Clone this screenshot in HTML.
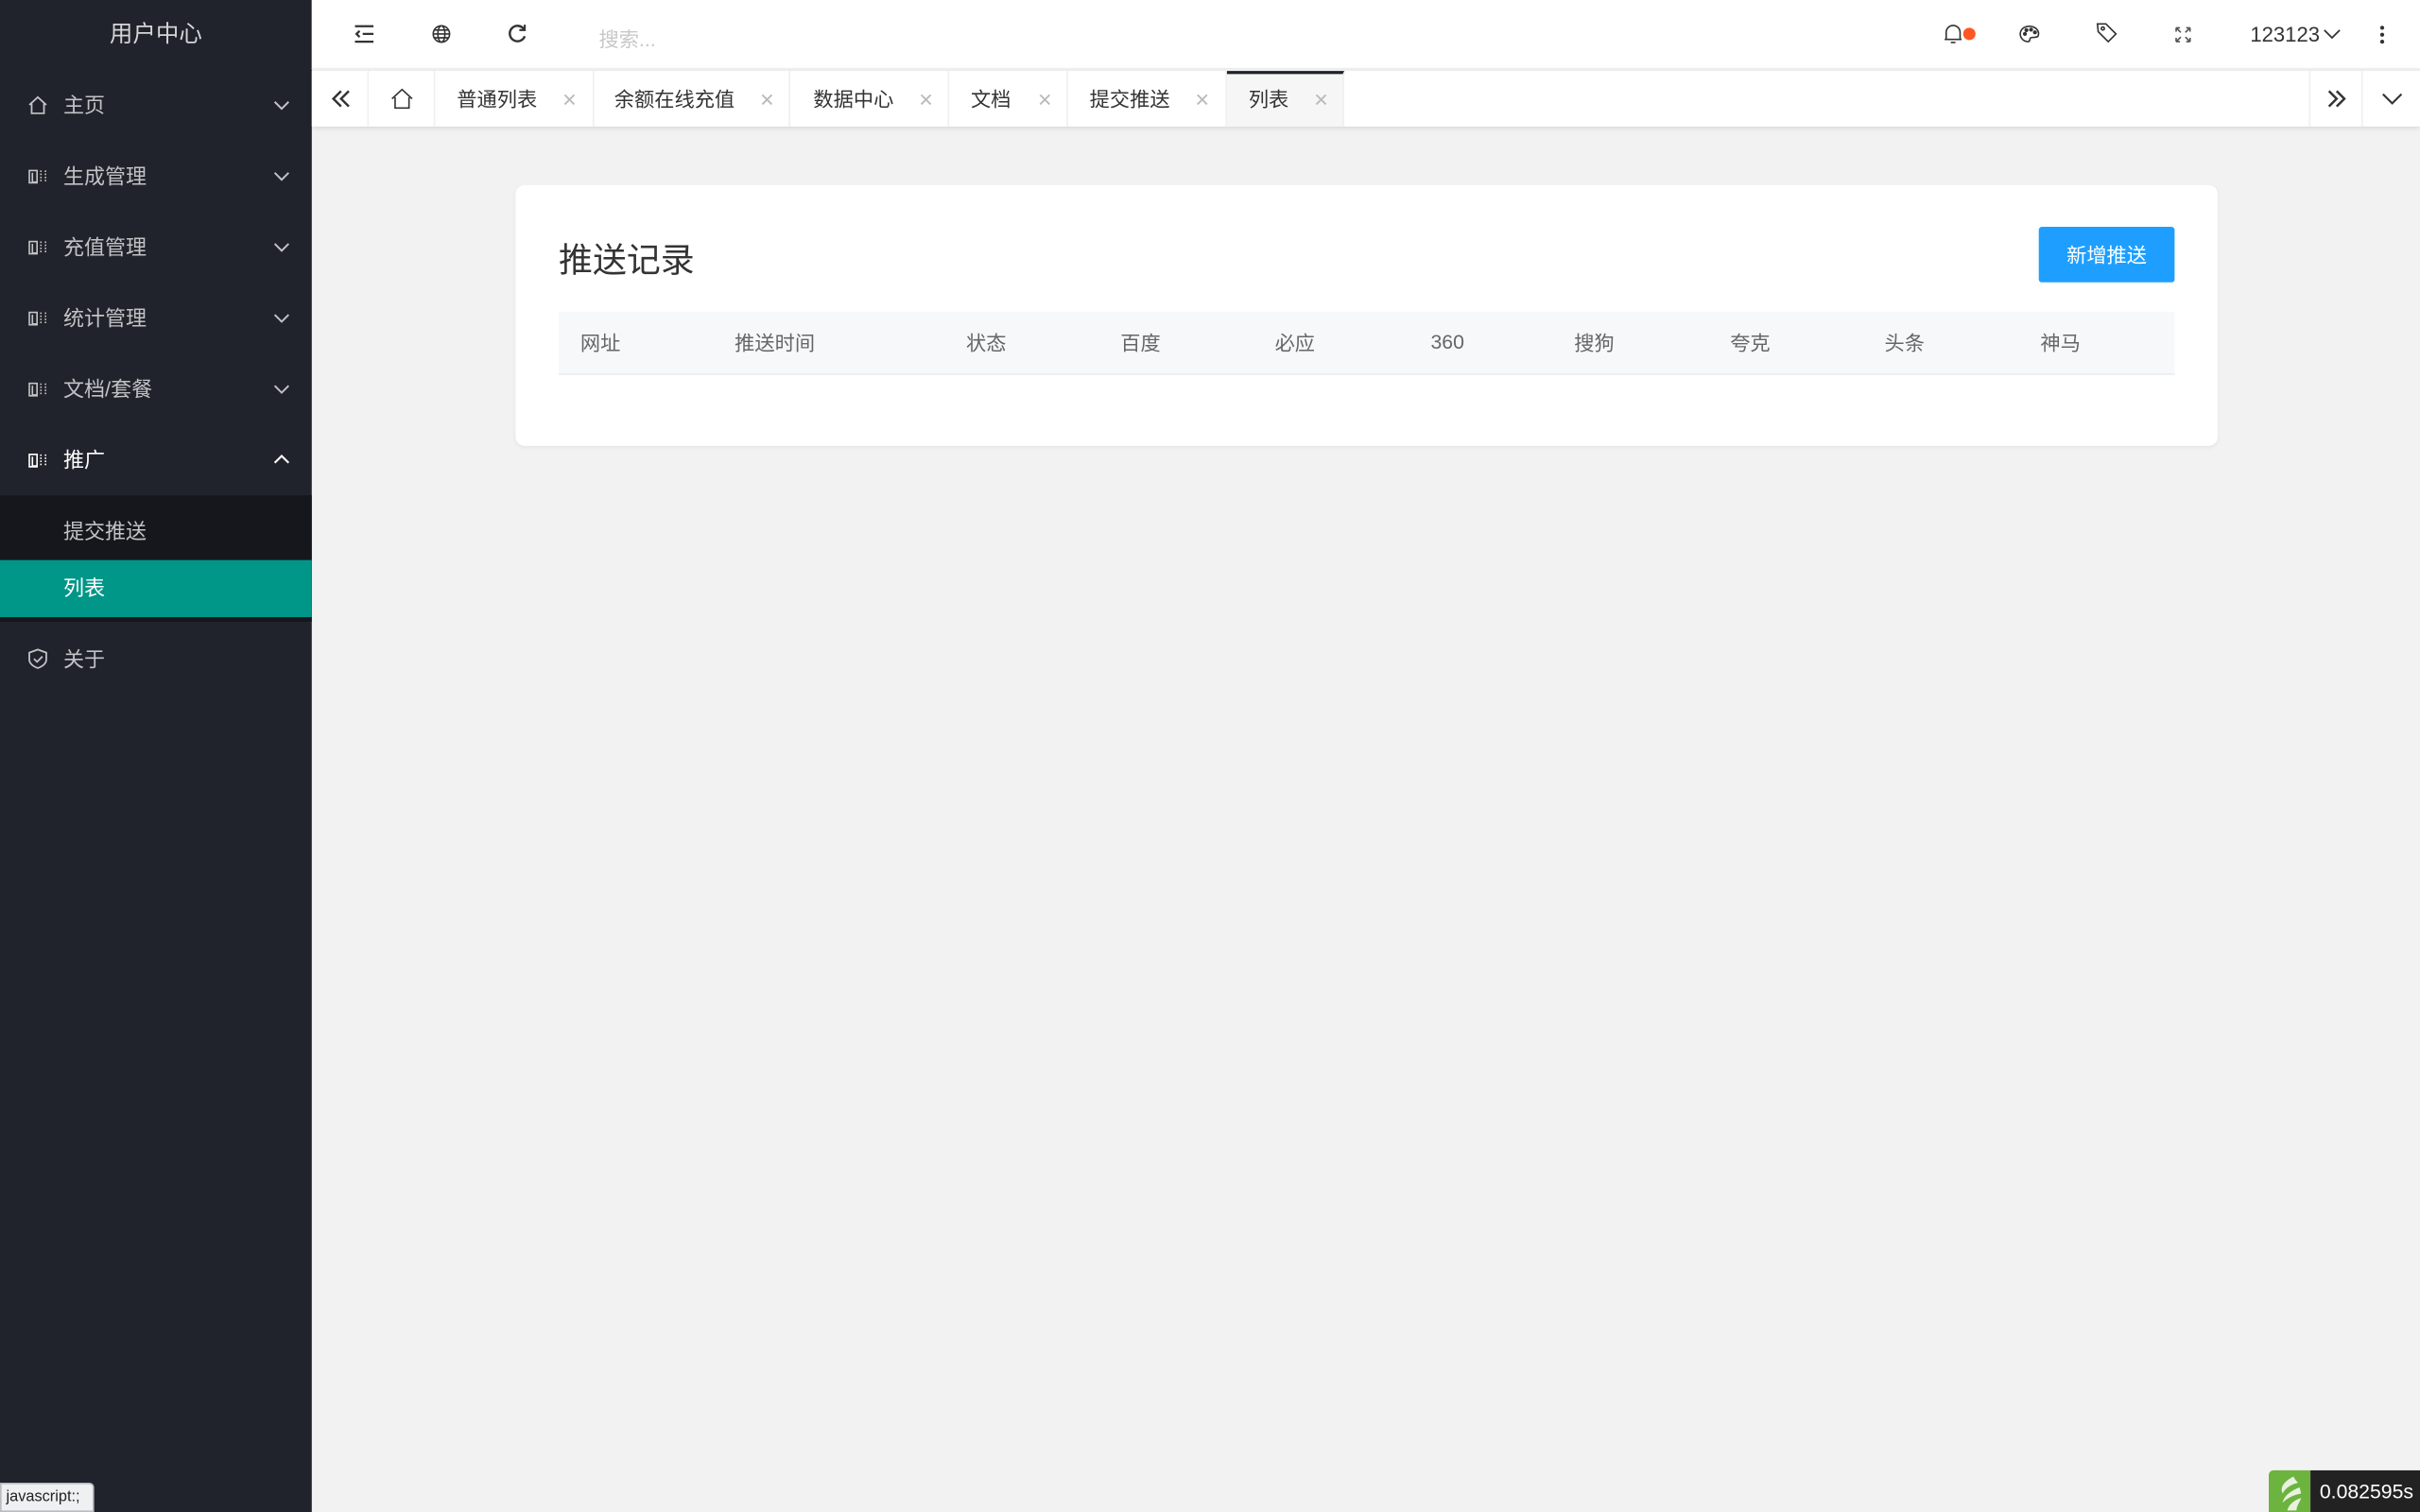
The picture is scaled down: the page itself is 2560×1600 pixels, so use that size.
<!DOCTYPE html>
<html><head><meta charset="utf-8"><style>
*{margin:0;padding:0;box-sizing:border-box}
html,body{width:2560px;height:1600px;overflow:hidden;background:#f2f2f2}
#w{width:1568px;height:980px;transform:scale(1.632653);transform-origin:0 0;position:relative;font-family:"Liberation Sans","Noto Sans CJK SC",sans-serif;background:#f2f2f2}
.a{position:absolute}
.side{left:0;top:0;width:202px;height:980px;background:#20232b}
.mi{position:absolute;left:0;width:202px;height:46px;color:#c2c3c6;font-size:13.5px;line-height:48px}
.mi .t{position:absolute;left:41px}
.mi svg{position:absolute}
.tx{font-size:13px;color:#333;position:absolute;top:0;line-height:38px}
.tab{position:absolute;top:0;height:36px;border-right:1px solid #f0f0f0}
.x{position:absolute;top:0;line-height:38px;color:#bbb;font-size:12px}
.th{position:absolute;top:0;line-height:42px;font-size:13px;color:#666}
</style></head><body><div id="w">
<div class="a side">
 <div class="a" style="left:0;top:0;width:202px;height:45px;line-height:46px;text-align:center;color:#d4d5d7;font-size:15px">用户中心</div>
 <div class="mi" style="top:45px"><svg style="left:18px;top:17px" width="13" height="12" viewBox="0 0 13 12" fill="none" stroke="#c2c3c6" stroke-width="1.1"><path d="M1 6L6.5 1 12 6M2.5 5v6.5h8V5"/></svg><span class="t">主页</span><svg style="left:177px;top:20px" width="11" height="7" viewBox="0 0 11 7" fill="none" stroke="#c2c3c6" stroke-width="1.2"><path d="M1 1l4.5 4.5L10 1"/></svg></div>
 <div class="mi" style="top:91px"><svg style="left:18px;top:18px" width="13" height="11" viewBox="0 0 13 11" fill="none" stroke="#c2c3c6" stroke-width="1"><path d="M1 1.5h5v8H1zM3 3v6h3M8 2h1M8 4h1M8 6h1M8 8h1M11 2h1M11 4h1M11 6h1M11 8h1"/></svg><span class="t">生成管理</span><svg style="left:177px;top:20px" width="11" height="7" viewBox="0 0 11 7" fill="none" stroke="#c2c3c6" stroke-width="1.2"><path d="M1 1l4.5 4.5L10 1"/></svg></div>
 <div class="mi" style="top:137px"><svg style="left:18px;top:18px" width="13" height="11" viewBox="0 0 13 11" fill="none" stroke="#c2c3c6" stroke-width="1"><path d="M1 1.5h5v8H1zM3 3v6h3M8 2h1M8 4h1M8 6h1M8 8h1M11 2h1M11 4h1M11 6h1M11 8h1"/></svg><span class="t">充值管理</span><svg style="left:177px;top:20px" width="11" height="7" viewBox="0 0 11 7" fill="none" stroke="#c2c3c6" stroke-width="1.2"><path d="M1 1l4.5 4.5L10 1"/></svg></div>
 <div class="mi" style="top:183px"><svg style="left:18px;top:18px" width="13" height="11" viewBox="0 0 13 11" fill="none" stroke="#c2c3c6" stroke-width="1"><path d="M1 1.5h5v8H1zM3 3v6h3M8 2h1M8 4h1M8 6h1M8 8h1M11 2h1M11 4h1M11 6h1M11 8h1"/></svg><span class="t">统计管理</span><svg style="left:177px;top:20px" width="11" height="7" viewBox="0 0 11 7" fill="none" stroke="#c2c3c6" stroke-width="1.2"><path d="M1 1l4.5 4.5L10 1"/></svg></div>
 <div class="mi" style="top:229px"><svg style="left:18px;top:18px" width="13" height="11" viewBox="0 0 13 11" fill="none" stroke="#c2c3c6" stroke-width="1"><path d="M1 1.5h5v8H1zM3 3v6h3M8 2h1M8 4h1M8 6h1M8 8h1M11 2h1M11 4h1M11 6h1M11 8h1"/></svg><span class="t">文档/套餐</span><svg style="left:177px;top:20px" width="11" height="7" viewBox="0 0 11 7" fill="none" stroke="#c2c3c6" stroke-width="1.2"><path d="M1 1l4.5 4.5L10 1"/></svg></div>
 <div class="mi" style="top:275px;color:#fff"><svg style="left:18px;top:18px" width="13" height="11" viewBox="0 0 13 11" fill="none" stroke="#fff" stroke-width="1"><path d="M1 1.5h5v8H1zM3 3v6h3M8 2h1M8 4h1M8 6h1M8 8h1M11 2h1M11 4h1M11 6h1M11 8h1"/></svg><span class="t">推广</span><svg style="left:177px;top:19px" width="11" height="7" viewBox="0 0 11 7" fill="none" stroke="#fff" stroke-width="1.3"><path d="M1 6l4.5-4.5L10 6"/></svg></div>
 <div class="a" style="left:0;top:321px;width:202px;height:82px;background:#16171c"></div>
 <div class="mi" style="top:321px;height:42px;line-height:48px"><span class="t">提交推送</span></div>
 <div class="mi" style="top:363px;height:37px;line-height:37px;background:#009688;color:#fff"><span class="t">列表</span></div>
 <div class="mi" style="top:404px"><svg style="left:18px;top:16px" width="13" height="14" viewBox="0 0 13 14" fill="none" stroke="#c2c3c6" stroke-width="1.1"><path d="M6.5 1L12 3v4.5C12 10 9.5 12 6.5 13 3.5 12 1 10 1 7.5V3z"/><path d="M4 7l2 2 3.5-3.5"/></svg><span class="t">关于</span></div>
</div>
<div class="a" style="left:202px;top:0;width:1366px;height:45px;background:#fff;border-bottom:1px solid #f0f0f0"></div>
<svg class="a" style="left:229px;top:16px" width="14" height="12" viewBox="0 0 14 12" fill="none" stroke="#333" stroke-width="1.4"><path d="M1 1h12M6 6h7M1 11h12M4 4L2 6l2 2"/></svg>
<svg class="a" style="left:280px;top:16px" width="12" height="12" viewBox="0 0 12 12" fill="none" stroke="#333" stroke-width="1"><circle cx="6" cy="6" r="5.3"/><ellipse cx="6" cy="6" rx="2.3" ry="5.3"/><path d="M.7 6h10.6M1.5 3.5h9M1.5 8.5h9"/></svg>
<svg class="a" style="left:329px;top:15px" width="13" height="13" viewBox="0 0 13 13" fill="none" stroke="#333" stroke-width="1.5"><path d="M10.5 4A5 5 0 1 0 11 8.5"/><path d="M11 1v3.5H7.5" stroke-width="1.3"/></svg>
<div class="a" style="left:388px;top:15px;font-size:13px;color:#c8c8c8">搜索...</div>
<svg class="a" style="left:1259px;top:15px" width="13" height="14" viewBox="0 0 13 14" fill="none" stroke="#333" stroke-width="1"><path d="M2 10.5V6a4.5 4.5 0 0 1 9 0v4.5M1 10.5h11M5 12.5h3"/></svg>
<div class="a" style="left:1272px;top:18px;width:8px;height:8px;border-radius:50%;background:#ff5722"></div>
<svg class="a" style="left:1308px;top:16px" width="14" height="12" viewBox="0 0 14 12" fill="none" stroke="#333" stroke-width="1"><path d="M7 1C3 1 1 3.5 1 6c0 3 2.5 5 5 5 1.5 0 1-1.5 1.5-2.3.7-1 4.5.3 5.2-1.7C13.5 4 11 1 7 1z"/><circle cx="4" cy="6" r=".8" fill="#333"/><circle cx="5" cy="3.5" r=".8" fill="#333"/><circle cx="8" cy="3.2" r=".8" fill="#333"/><circle cx="10.5" cy="5" r=".8" fill="#333"/></svg>
<svg class="a" style="left:1358px;top:14px" width="14" height="14" viewBox="0 0 14 14" fill="none" stroke="#333" stroke-width="1"><path d="M1 1.5h5.5l6.5 6.5-5 5L1.5 6.5z"/><circle cx="4.5" cy="4.5" r="1"/></svg>
<svg class="a" style="left:1409px;top:17px" width="11" height="11" viewBox="0 0 11 11" fill="none" stroke="#555" stroke-width="1"><path d="M1 1l3 3M1 1v2.5M1 1h2.5M10 1L7 4M10 1v2.5M10 1H7.5M1 10l3-3M1 10V7.5M1 10h2.5M10 10L7 7M10 10V7.5M10 10H7.5"/></svg>
<div class="a" style="left:1458px;top:15px;font-size:13.5px;color:#333">123123</div>
<svg class="a" style="left:1505px;top:18px" width="12" height="8" viewBox="0 0 12 8" fill="none" stroke="#333" stroke-width="1.1"><path d="M1 1.5l5 5 5-5"/></svg>
<svg class="a" style="left:1541px;top:16px" width="5" height="13" viewBox="0 0 5 13" fill="#333"><circle cx="2.5" cy="2" r="1.3"/><circle cx="2.5" cy="6.5" r="1.3"/><circle cx="2.5" cy="11" r="1.3"/></svg>
<div class="a" style="left:202px;top:46px;width:1366px;height:36px;background:#fff;box-shadow:0 1px 3px rgba(0,0,0,.12)">
 <div class="tab" style="left:0;width:37px"><svg style="position:absolute;left:12px;top:12px" width="14" height="12" viewBox="0 0 14 12" fill="none" stroke="#333" stroke-width="1.5"><path d="M7 1L2 6l5 5M12 1L7 6l5 5"/></svg></div>
 <div class="tab" style="left:37px;width:43px"><svg style="position:absolute;left:14px;top:11px" width="15" height="14" viewBox="0 0 15 14" fill="none" stroke="#333" stroke-width="1"><path d="M1 7L7.5 1 14 7M3 6v7h9V6"/></svg></div>
 <div class="tab" style="left:80px;width:103px"><span class="tx" style="left:14px">普通列表</span><span class="x" style="left:82px">✕</span></div>
 <div class="tab" style="left:183px;width:127px"><span class="tx" style="left:13px">余额在线充值</span><span class="x" style="left:107px">✕</span></div>
 <div class="tab" style="left:310px;width:103px"><span class="tx" style="left:15px">数据中心</span><span class="x" style="left:83px">✕</span></div>
 <div class="tab" style="left:413px;width:77px"><span class="tx" style="left:14px">文档</span><span class="x" style="left:57px">✕</span></div>
 <div class="tab" style="left:490px;width:103px"><span class="tx" style="left:14px">提交推送</span><span class="x" style="left:82px">✕</span></div>
 <div class="tab" style="left:593px;width:76px;background:#f6f6f6;border-top:2px solid #20222a"><span class="tx" style="left:14px;top:-2px">列表</span><span class="x" style="left:56px;top:-2px">✕</span></div>
 <div class="tab" style="left:1294px;width:35px;border-left:1px solid #f0f0f0"><svg style="position:absolute;left:10px;top:12px" width="14" height="12" viewBox="0 0 14 12" fill="none" stroke="#333" stroke-width="1.5"><path d="M2 1l5 5-5 5M7 1l5 5-5 5"/></svg></div>
 <div class="tab" style="left:1329px;width:37px;border:0"><svg style="position:absolute;left:12px;top:14px" width="14" height="8" viewBox="0 0 14 8" fill="none" stroke="#333" stroke-width="1.3"><path d="M1 1l6 6 6-6"/></svg></div>
</div>
<div class="a" style="left:334px;top:120px;width:1103px;height:169px;background:#fff;border-radius:6px;box-shadow:0 1px 3px rgba(0,0,0,.06)">
 <div class="a" style="left:28px;top:31px;font-size:22px;color:#333">推送记录</div>
 <div class="a" style="left:987px;top:27px;width:88px;height:36px;background:#1e9fff;border-radius:2px;color:#fff;font-size:13px;line-height:38px;text-align:center">新增推送</div>
 <div class="a" style="left:28px;top:82px;width:1047px;height:41px;background:#f7f8fa;border-bottom:1px solid #ebedf0">
  <span class="th" style="left:14px">网址</span><span class="th" style="left:114px">推送时间</span><span class="th" style="left:264px">状态</span><span class="th" style="left:364px">百度</span><span class="th" style="left:464px">必应</span><span class="th" style="left:565px;top:-1px">360</span><span class="th" style="left:658px">搜狗</span><span class="th" style="left:759px">夸克</span><span class="th" style="left:859px">头条</span><span class="th" style="left:960px">神马</span>
 </div>
</div>
<div class="a" style="left:0;top:961px;width:61px;height:19px;background:#eef0f2;border:1px solid #b9bcbf;border-radius:0 3px 0 0;font-size:10px;line-height:17px;padding-left:3px;color:#222">javascript:;</div>
<div class="a" style="left:1470px;top:953px;width:27px;height:27px;background:#6db33f;border-radius:3px 0 0 0"><svg width="27" height="27" viewBox="0 0 27 27" fill="#e8f2df"><path d="M16 4c-6 3-9 7-7 11 2-4 6-6 10-7-1-1-2-2-3-4zM20 11c-5 2-10 5-11 10 3-3 7-5 12-6zM21 18c-4 1-8 4-9 8h6c0-3 2-5 3-8z"/></svg></div>
<div class="a" style="left:1497px;top:953px;width:71px;height:27px;background:#222;color:#fff;font-size:13px;line-height:27px;padding-left:6px">0.082595s</div>
</div></body></html>
